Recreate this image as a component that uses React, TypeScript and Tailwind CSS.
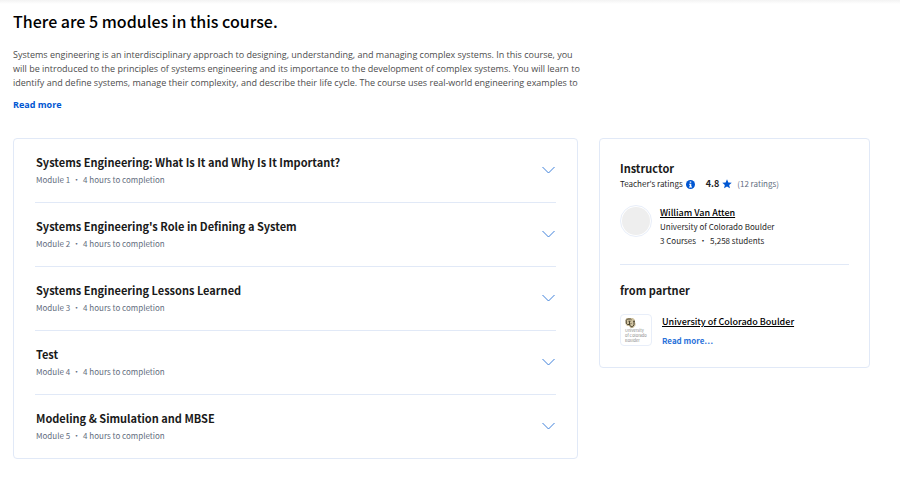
import React from "react";

const modules = [
  "Systems Engineering: What Is It and Why Is It Important?",
  "Systems Engineering's Role in Defining a System",
  "Systems Engineering Lessons Learned",
  "Test",
  "Modeling & Simulation and MBSE",
];

function ModuleRow({ title, index }: { title: string; index: number }) {
  return (
    <li className="border-b border-[#e1e9f7] last:border-b-0">
      <button
        type="button"
        aria-expanded="false"
        className="flex w-full items-center justify-between pt-[13px] pb-3.5 pl-px text-left"
      >
        <span className="flex flex-col">
          <span className="text-[11px] leading-5 font-bold text-[#1a1a1a]">{title}</span>
          <span className="flex text-[8px] leading-4 text-[#636d7e]">
            <span>Module {index}</span>
            <span className="w-[13px] text-center">•</span>
            <span>4 hours to completion</span>
          </span>
        </span>
        <svg className="mr-px" width="13" height="8" viewBox="0 0 13 8" fill="none" stroke="#3f80da" aria-hidden="true">
          <path d="M0.5 1L6.5 7L12.5 1" />
        </svg>
      </button>
    </li>
  );
}

function InfoIcon() {
  return (
    <svg width="9" height="9" viewBox="0 0 18 18" aria-hidden="true">
      <circle cx="9" cy="9" r="9" fill="#0056d2" />
      <path d="M7.5 3h3v2.6h-3zM6.2 7.4h4.4v5.4H12v2H6v-2h1.6V9.4H6.2z" fill="#fff" />
    </svg>
  );
}

function StarIcon() {
  return (
    <svg width="10" height="10" viewBox="0 0 20 20" fill="#0056d2" aria-hidden="true">
      <path d="M10 0.5l2.7 6.3 6.8.6-5.2 4.5 1.6 6.7-5.9-3.6-5.9 3.6 1.6-6.7L.5 7.4l6.8-.6z" />
    </svg>
  );
}

function PartnerLogo() {
  return (
    <div className="flex size-8 shrink-0 flex-col rounded-[4px] border border-[#e8eef9] pt-[3px] pl-1">
      <svg width="11" height="10" viewBox="0 0 22 20" aria-hidden="true">
        <path d="M3 0h13l4 4v5l1 1v5l-5 5h-5l-3-4H4l-3-4V3z" fill="#cfc2a0" />
        <path
          d="M13 3.500L11 2H5L2.500 4.500v6L5 13h5l2.500-2.500M9 6.500v7l3 4h3l3-4v-7M7 6.500h4M16 6.500h4"
          fill="none"
          stroke="#4b432f"
          strokeWidth="2"
        />
      </svg>
      <span className="flex flex-col text-[4px] leading-[5px] text-[#8a8a8a]">
        <span>University</span>
        <span>of Colorado</span>
        <span>Boulder</span>
      </span>
    </div>
  );
}

export default function App() {
  return (
    <div className="bg-white font-['Noto_Sans_CJK_SC',sans-serif] text-[#1f1f1f]">
      <div className="h-1 bg-linear-to-b from-[#f3f3f3] to-white" />
      <main className="pt-[5px] pr-[30px] pb-8 pl-[13px]">
        <h2 className="text-[16px] leading-6 font-medium text-black">There are 5 modules in this course.</h2>
        <div className="mt-[15px] font-['Open_Sans',sans-serif]">
          <p className="text-[9px] leading-[14px] text-[#4d4d4d]">
            Systems engineering is an interdisciplinary approach to designing, understanding, and managing complex
            systems. In this course, you
            <br />
            will be introduced to the principles of systems engineering and its importance to the development of complex
            systems. You will learn to
            <br />
            identify and define systems, manage their complexity, and describe their life cycle. The course uses
            real-world engineering examples to
          </p>
          <button type="button" className="mt-[7px] block text-[9px] leading-4 font-bold text-[#0056d2]">
            Read more
          </button>
        </div>

        <div className="mt-[25px] flex items-start gap-[21px]">
          <ul className="min-w-0 flex-1 rounded-[4px] border border-[#e1e9f7] px-[21px]">
            {modules.map((title, i) => (
              <ModuleRow key={title} title={title} index={i + 1} />
            ))}
          </ul>

          <aside className="w-[271px] shrink-0 rounded-[4px] border border-[#e1e9f7] px-5 pt-5 pb-[18px]">
            <section className="border-b border-[#e1e9f7] pb-4">
              <h3 className="text-[11px] leading-[18px] font-bold text-[#1a1a1a]">Instructor</h3>
              <div className="flex items-center text-[8px] leading-3.5">
                <span className="mr-[3px]">Teacher's ratings</span>
                <InfoIcon />
                <span className="mr-[3px] ml-[11px] text-[9px] font-bold">4.8</span>
                <StarIcon />
                <span className="ml-[5px] text-[#636d7e]">(12 ratings)</span>
              </div>
              <div className="mt-3.5 flex gap-2">
                <div className="size-8 shrink-0 rounded-full border border-[#e8eef9] p-px">
                  <div className="size-full rounded-full bg-[#eeeeee]" />
                </div>
                <div className="flex flex-col items-start pt-px text-[8px] leading-3.5">
                  <a href="#instructor" className="text-[9px] font-medium text-black underline">
                    William Van Atten
                  </a>
                  <span>University of Colorado Boulder</span>
                  <span className="flex">
                    3 Courses<span className="w-3.5 text-center">•</span>5,258 students
                  </span>
                </div>
              </div>
            </section>
            <section className="pt-4">
              <h3 className="text-[11px] leading-[18px] font-bold text-[#1a1a1a]">from partner</h3>
              <div className="mt-[15px] flex gap-2.5">
                <PartnerLogo />
                <div className="flex flex-col items-start gap-[3px] text-[9px] leading-4">
                  <a href="#partner" className="font-medium text-black underline">
                    University of Colorado Boulder
                  </a>
                  <a href="#more" className="text-[8px] font-bold text-[#2a72da]">
                    Read more…
                  </a>
                </div>
              </div>
            </section>
          </aside>
        </div>
      </main>
    </div>
  );
}
